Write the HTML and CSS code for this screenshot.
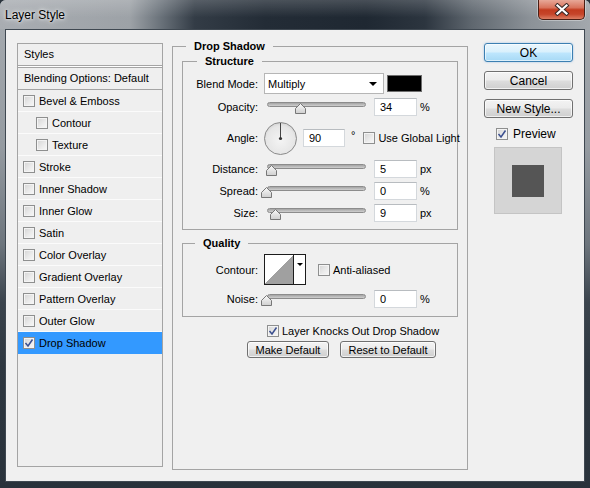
FILE: index.html
```html
<!DOCTYPE html>
<html>
<head>
<meta charset="utf-8">
<title>Layer Style</title>
<link rel="stylesheet" href="styles.css">
</head>
<body>
<div class="window">
  <div class="titlebar">
    <span class="title">Layer Style</span>
    <div class="close">
      <svg width="16" height="13" viewBox="0 0 16 13">
        <path d="M3.5 2.5 L12.5 10.5 M12.5 2.5 L3.5 10.5" stroke="#3a2a28" stroke-width="4.2" stroke-linecap="square" fill="none"/>
        <path d="M3.5 2.5 L12.5 10.5 M12.5 2.5 L3.5 10.5" stroke="#ffffff" stroke-width="2.2" stroke-linecap="square" fill="none"/>
      </svg>
    </div>
  </div>
  <div class="client">
    <div class="list">
      <div class="list-head">Styles</div>
      <div class="list-blend">Blending Options: Default</div>
      <div class="item"><span class="cb"></span>Bevel &amp; Emboss</div>
      <div class="item sub"><span class="cb"></span>Contour</div>
      <div class="item sub"><span class="cb"></span>Texture</div>
      <div class="item"><span class="cb"></span>Stroke</div>
      <div class="item"><span class="cb"></span>Inner Shadow</div>
      <div class="item"><span class="cb"></span>Inner Glow</div>
      <div class="item"><span class="cb"></span>Satin</div>
      <div class="item"><span class="cb"></span>Color Overlay</div>
      <div class="item"><span class="cb"></span>Gradient Overlay</div>
      <div class="item"><span class="cb"></span>Pattern Overlay</div>
      <div class="item"><span class="cb"></span>Outer Glow</div>
      <div class="item selected"><span class="cb"><svg class="tick" width="10" height="10" viewBox="0 0 10 10"><path d="M1.5 5 L4 8 L8.5 1.5" stroke="#3b4f8f" stroke-width="1.5" fill="none"/></svg></span>Drop Shadow</div>
    </div>

    <div class="group outer">
      <div class="legend legend-outer">Drop Shadow</div>

      <div class="group structure">
        <div class="legend legend-structure">Structure</div>

        <div class="row r-blend">
          <span class="lbl">Blend Mode:</span>
          <div class="select">Multiply<span class="arrow"></span></div>
          <div class="color"></div>
        </div>

        <div class="row r-slider r-opacity">
          <span class="lbl">Opacity:</span>
          <div class="slider"><div class="track"></div><svg class="thumb" style="left:31px" width="11" height="11" viewBox="0 0 11 11"><defs><linearGradient id="tg1" x1="0" y1="0" x2="0" y2="1"><stop offset="0" stop-color="#fafafa"/><stop offset="1" stop-color="#cfcfcf"/></linearGradient></defs><path d="M0.5 10.5 L0.5 5.5 L5.5 0.5 L10.5 5.5 L10.5 10.5 Z" fill="url(#tg1)" stroke="#777"/></svg></div>
          <div class="num">34</div>
          <span class="unit">%</span>
        </div>

        <div class="row r-angle">
          <span class="lbl">Angle:</span>
          <div class="dial">
            <svg width="33" height="33" viewBox="0 0 33 33">
              <defs><radialGradient id="dg" cx="0.5" cy="0.55" r="0.55"><stop offset="0" stop-color="#f4f4f4"/><stop offset="0.8" stop-color="#e6e6e6"/><stop offset="1" stop-color="#d4d4d4"/></radialGradient></defs>
              <circle cx="16.5" cy="16.5" r="16" fill="url(#dg)" stroke="#8a8a8a"/>
              <line x1="16.5" y1="1" x2="16.5" y2="16.5" stroke="#444" stroke-width="1"/>
              <circle cx="16.5" cy="16.5" r="1.6" fill="#333"/>
            </svg>
          </div>
          <div class="num num-angle">90</div>
          <span class="deg">°</span>
          <span class="cb cb-global"></span>
          <span class="cb-text">Use Global Light</span>
        </div>

        <div class="row r-slider r-distance">
          <span class="lbl">Distance:</span>
          <div class="slider"><div class="track"></div><svg class="thumb" style="left:2px" width="11" height="11" viewBox="0 0 11 11"><path d="M0.5 10.5 L0.5 5.5 L5.5 0.5 L10.5 5.5 L10.5 10.5 Z" fill="url(#tg1)" stroke="#777"/></svg></div>
          <div class="num">5</div>
          <span class="unit">px</span>
        </div>

        <div class="row r-slider r-spread">
          <span class="lbl">Spread:</span>
          <div class="slider"><div class="track"></div><svg class="thumb" style="left:-3px" width="11" height="11" viewBox="0 0 11 11"><path d="M0.5 10.5 L0.5 5.5 L5.5 0.5 L10.5 5.5 L10.5 10.5 Z" fill="url(#tg1)" stroke="#777"/></svg></div>
          <div class="num">0</div>
          <span class="unit">%</span>
        </div>

        <div class="row r-slider r-size">
          <span class="lbl">Size:</span>
          <div class="slider"><div class="track"></div><svg class="thumb" style="left:6px" width="11" height="11" viewBox="0 0 11 11"><path d="M0.5 10.5 L0.5 5.5 L5.5 0.5 L10.5 5.5 L10.5 10.5 Z" fill="url(#tg1)" stroke="#777"/></svg></div>
          <div class="num">9</div>
          <span class="unit">px</span>
        </div>
      </div>

      <div class="group quality">
        <div class="legend legend-quality">Quality</div>

        <div class="row r-contour">
          <span class="lbl">Contour:</span>
          <div class="contour">
            <div class="contour-preview"></div>
            <div class="contour-drop"><span class="arrow small"></span></div>
          </div>
          <span class="cb cb-anti"></span>
          <span class="cb-text">Anti-aliased</span>
        </div>

        <div class="row r-slider r-noise">
          <span class="lbl">Noise:</span>
          <div class="slider"><div class="track"></div><svg class="thumb" style="left:-3px" width="11" height="11" viewBox="0 0 11 11"><path d="M0.5 10.5 L0.5 5.5 L5.5 0.5 L10.5 5.5 L10.5 10.5 Z" fill="url(#tg1)" stroke="#777"/></svg></div>
          <div class="num">0</div>
          <span class="unit">%</span>
        </div>
      </div>

      <div class="row r-knock">
        <span class="cb"><svg class="tick" width="10" height="10" viewBox="0 0 10 10"><path d="M1.5 5 L4 8 L8.5 1.5" stroke="#3b4f8f" stroke-width="1.5" fill="none"/></svg></span>
        <span class="cb-text">Layer Knocks Out Drop Shadow</span>
      </div>

      <div class="row r-buttons">
        <div class="btn btn-small btn-make">Make Default</div>
        <div class="btn btn-small btn-reset">Reset to Default</div>
      </div>
    </div>

    <div class="side">
      <div class="btn btn-side btn-ok">OK</div>
      <div class="btn btn-side">Cancel</div>
      <div class="btn btn-side">New Style...</div>
      <div class="preview-row">
        <span class="cb"><svg class="tick" width="10" height="10" viewBox="0 0 10 10"><path d="M1.5 5 L4 8 L8.5 1.5" stroke="#3b4f8f" stroke-width="1.5" fill="none"/></svg></span>
        <span class="preview-text">Preview</span>
      </div>
      <div class="swatch"><div class="swatch-inner"></div></div>
    </div>
  </div>
</div>
</body>
</html>
```

FILE: styles.css
```css
* { box-sizing: border-box; }

html, body {
  margin: 0;
  padding: 0;
}

body {
  width: 590px;
  height: 488px;
  overflow: hidden;
  background: #2b343d;
  font-family: "Liberation Sans", Arial, sans-serif;
  font-size: 11px;
  color: #000;
}

.window {
  width: 590px;
  height: 488px;
  display: flex;
  flex-direction: column;
  background: linear-gradient(180deg, #a6abb0 0%, #959ba1 30%, #6d757d 50%, #3a434c 62%, #2e3740 75%, #29323b 100%);
  border-radius: 6px 6px 0 0;
}

.titlebar {
  height: 29px;
  flex: none;
  display: flex;
  justify-content: space-between;
  align-items: flex-start;
  border-radius: 6px 6px 0 0;
  background:
    linear-gradient(180deg, rgba(255,255,255,0.18) 0%, rgba(255,255,255,0) 60%),
    linear-gradient(90deg, #a9adb2 0%, #9da2a7 22%, #6c747c 27%, #333c46 33%, #232c36 45%, #1f2832 62%, #2c353f 72%, #5f676f 80%, #8c9298 90%, #a3a8ad 100%);
}

.title {
  padding: 8px 0 0 5px;
  line-height: 14px;
  font-size: 12px;
  color: #000;
  text-shadow: 0 0 6px #fff, 0 0 3px rgba(255,255,255,0.85);
}

.close {
  width: 47px;
  height: 20px;
  margin-right: 5px;
  display: flex;
  align-items: center;
  justify-content: center;
  border: 1px solid #4a1e14;
  border-top: none;
  border-radius: 0 0 5px 5px;
  background: linear-gradient(180deg, #e7a898 0%, #d8735c 40%, #c23b1f 52%, #c6452a 75%, #dc7e63 100%);
  box-shadow: 0 0 0 1px rgba(255,255,255,0.35);
}

.client {
  flex: 1;
  margin: 0 5px 6px 5px;
  border: 1px solid #3f4851;
  background: #f0f0f0;
  padding: 13px 0 0 11px;
  display: flex;
  align-items: flex-start;
}

/* ---------- left list ---------- */
.list {
  width: 146px;
  height: 424px;
  flex: none;
  margin-right: 9px;
  border: 1px solid #a4a4a4;
  background: #efefef;
}

.list-head {
  height: 22px;
  line-height: 21px;
  padding-left: 6px;
  border-bottom: 1px solid #a4a4a4;
  margin-bottom: 1px;
  box-shadow: 0 1px 0 #fff;
}

.list-blend {
  height: 23px;
  line-height: 21px;
  padding-left: 6px;
  border-top: 1px solid #a4a4a4;
  border-bottom: 1px solid #a4a4a4;
}

.item {
  height: 22px;
  display: flex;
  align-items: center;
  padding-left: 5px;
  border-bottom: 1px solid #fbfbfb;
}

.item.sub {
  padding-left: 18px;
}

.item .cb {
  margin-right: 4px;
}

.item.selected {
  background: #3399ff;
  border-bottom-color: #3399ff;
}

/* ---------- checkbox ---------- */
.cb {
  width: 12px;
  height: 12px;
  flex: none;
  display: flex;
  align-items: center;
  justify-content: center;
  border: 1px solid #8e8f8f;
  background: linear-gradient(135deg, #d4d4d4 0%, #ececec 60%, #f8f8f8 100%);
  box-shadow: inset 0 0 0 1px #f4f4f4;
}

.cb-text {
  margin-left: 3px;
  white-space: nowrap;
}

/* ---------- groups ---------- */
.group {
  border: 1px solid #a4a4a4;
  display: flex;
  flex-direction: column;
}

.outer {
  width: 296px;
  height: 424px;
  flex: none;
  margin-top: 3px;
  margin-right: 16px;
  padding: 0 9px;
}

.legend {
  align-self: flex-start;
  margin-top: -7px;
  line-height: 13px;
  height: 13px;
  padding: 0 8px;
  background: #f0f0f0;
  font-weight: bold;
  white-space: nowrap;
}

.legend-outer { margin-left: 4px; }
.legend-structure { margin-left: 14px; }
.legend-quality { margin-left: 12px; }

.structure {
  margin-top: 8px;
  height: 169px;
}

.quality {
  margin-top: 13px;
  height: 74px;
}

/* ---------- rows ---------- */
.row {
  display: flex;
  align-items: center;
  flex: none;
}

.lbl {
  width: 75px;
  flex: none;
  margin-right: 6px;
  text-align: right;
  white-space: nowrap;
}

.r-blend { height: 21px; margin-top: 5px; }
.r-opacity { margin-top: 4px; }
.r-angle { height: 34px; margin-top: 5px; }
.r-distance { margin-top: 5px; }
.r-spread { margin-top: 4px; }
.r-size { margin-top: 4px; }
.r-contour { height: 31px; margin-top: 4px; }
.r-noise { margin-top: 5px; }
.r-slider { height: 18px; }

.r-knock {
  height: 13px;
  margin-top: 7px;
  padding-left: 85px;
}

.r-buttons {
  height: 17px;
  margin-top: 4px;
  padding-left: 65px;
}

/* ---------- controls ---------- */
.select {
  width: 120px;
  height: 21px;
  display: flex;
  align-items: center;
  justify-content: space-between;
  padding: 0 6px 0 3px;
  border: 1px solid #b6b6b6;
  background: #fff;
}

.arrow {
  width: 0;
  height: 0;
  border-left: 4px solid transparent;
  border-right: 4px solid transparent;
  border-top: 4px solid #000;
}

.arrow.small {
  border-left-width: 3px;
  border-right-width: 3px;
  border-top-width: 3px;
}

.color {
  width: 35px;
  height: 17px;
  margin-left: 3px;
  background: #000;
  border: 1px solid #6e6e6e;
}

.slider {
  position: relative;
  width: 106px;
  height: 18px;
  flex: none;
  padding-top: 4px;
}

.track {
  margin-left: 3px;
  width: 99px;
  height: 5px;
  border: 1px solid #8c8c8c;
  border-radius: 3px;
  background: linear-gradient(180deg, #a4a4a4 0%, #cfcfcf 100%);
}

.thumb {
  position: absolute;
  top: 5px;
  display: block;
}

.num {
  width: 43px;
  height: 18px;
  flex: none;
  margin-left: 4px;
  padding-left: 5px;
  line-height: 16px;
  border: 1px solid #d4d8dc;
  border-top-color: #b8bcc0;
  background: #fff;
}

.unit {
  margin-left: 3px;
}

.dial {
  width: 33px;
  height: 33px;
  flex: none;
}

.dial svg { display: block; }

.num-angle {
  width: 42px;
  margin-left: 6px;
}

.deg {
  margin-left: 6px;
  margin-top: -6px;
}

.cb-global {
  margin-left: 8px;
}

.contour {
  width: 42px;
  height: 31px;
  flex: none;
  display: flex;
  border: 1px solid #1c1c1c;
  background: #fff;
}

.contour-preview {
  width: 29px;
  height: 100%;
  background: linear-gradient(to bottom right, #ffffff 50%, #a0a0a0 50%);
  border-right: 1px solid #1c1c1c;
}

.contour-drop {
  flex: 1;
  display: flex;
  justify-content: center;
  padding-top: 8px;
}

.cb-anti {
  margin-left: 12px;
}

/* ---------- buttons ---------- */
.btn {
  display: flex;
  align-items: center;
  justify-content: center;
  border: 1px solid #707070;
  border-radius: 3px;
  background: linear-gradient(180deg, #f3f3f3 0%, #ebebeb 48%, #dddddd 52%, #cfcfcf 100%);
  box-shadow: inset 0 0 0 1px rgba(255,255,255,0.7);
  white-space: nowrap;
}

.btn-small {
  height: 17px;
}

.btn-make { width: 82px; }
.btn-reset { width: 96px; margin-left: 11px; }

.side {
  width: 89px;
  flex: none;
  display: flex;
  flex-direction: column;
}

.btn-side {
  height: 19px;
  font-size: 12px;
  margin-bottom: 9px;
}

.btn-ok {
  border-color: #3c7fb1;
  background: linear-gradient(180deg, #eaf6fd 0%, #d9f0fc 48%, #bee6fd 52%, #a7d9f5 100%);
  box-shadow: inset 0 0 0 1px rgba(255,255,255,0.6), 0 0 2px rgba(60,140,220,0.5);
}

.preview-row {
  height: 13px;
  display: flex;
  align-items: center;
  padding-left: 12px;
}

.preview-text {
  margin-left: 5px;
  font-size: 12px;
}

.swatch {
  width: 68px;
  height: 67px;
  margin-top: 7px;
  margin-left: 10px;
  display: flex;
  align-items: center;
  justify-content: center;
  border: 1px solid #c4c4c4;
  background: #d5d5d5;
}

.swatch-inner {
  width: 32px;
  height: 32px;
  background: #555555;
}

.tick { display: block; }
```
